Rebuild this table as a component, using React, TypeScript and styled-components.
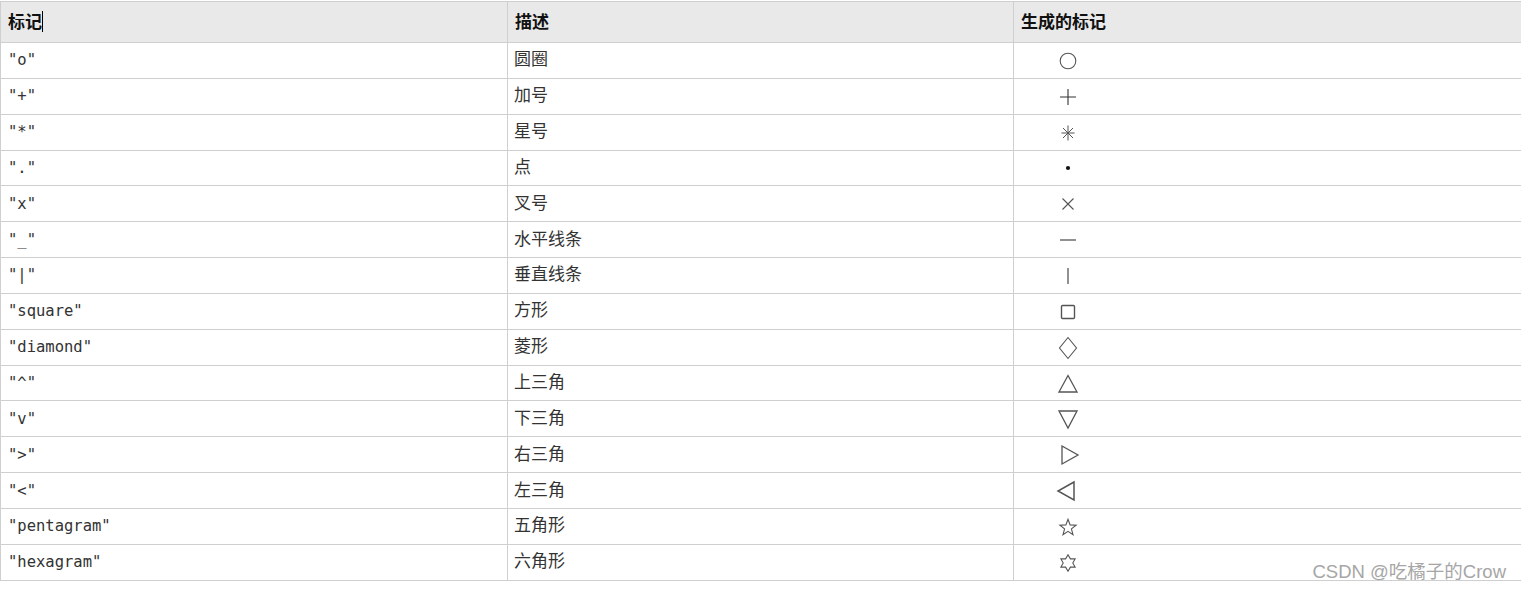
import React from "react";
import styled, { createGlobalStyle } from "styled-components";

const Global = createGlobalStyle`
  html, body { margin: 0; padding: 0; background: #fff; }
  body { font-family: "Noto Sans CJK SC", "Noto Sans", sans-serif; }
`;

const Page = styled.div`
  position: relative;
  width: 1521px;
  height: 590px;
  padding-top: 1px;
  box-sizing: border-box;
`;

const Table = styled.table`
  width: 1521px;
  border-collapse: collapse;
  table-layout: fixed;
  border: 1px solid #cfcfcf;
`;

const HeadRow = styled.tr`
  background: #e9e9e9;
  height: 41px;
`;

const Row = styled.tr`
  height: 35.85px;
`;

const HeadCell = styled.th`
  border: 1px solid #cfcfcf;
  text-align: left;
  padding: 0 0 3px 7px;
  font-family: "Noto Sans CJK SC", sans-serif;
  font-weight: 700;
  font-size: 17px;
  color: #111;
  vertical-align: middle;
`;

const Cell = styled.td<{ $mono?: boolean }>`
  border: 1px solid #cfcfcf;
  padding: 0 0 ${(p) => (p.$mono ? "0px" : "4px")} ${(p) => (p.$mono ? "7px" : "6px")};
  font-family: ${(p) =>
    p.$mono ? `"DejaVu Sans Mono", monospace` : `"Noto Sans CJK SC", sans-serif`};
  font-size: ${(p) => (p.$mono ? "15.5px" : "17px")};
  line-height: 24px;
  color: #333;
  vertical-align: middle;
  white-space: pre;
`;

const MarkCell = styled.td`
  border: 1px solid #cfcfcf;
  padding: 1px 0 0 42px;
  vertical-align: middle;
  line-height: 0;
`;

const Caret = styled.span`
  display: inline-block;
  width: 1px;
  height: 21px;
  background: #000;
  vertical-align: -4px;
`;

const Watermark = styled.div`
  position: absolute;
  right: 15px;
  bottom: 8px;
  font-family: "Liberation Sans", "Noto Sans CJK SC", sans-serif;
  font-size: 18.5px;
  color: #a6a6a6;
  line-height: 20px;
`;

const Svg = styled.svg`
  width: 24px;
  height: 24px;
  display: inline-block;
`;

type Kind =
  | "o" | "+" | "*" | "." | "x" | "_" | "|" | "square" | "diamond"
  | "^" | "v" | ">" | "<" | "pentagram" | "hexagram";

const starPts = (n: number, ro: number, ri: number, cx: number, cy: number, rot: number) => {
  const pts: string[] = [];
  for (let i = 0; i < n * 2; i++) {
    const r = i % 2 === 0 ? ro : ri;
    const a = rot + (Math.PI * i) / n;
    pts.push(`${(cx + r * Math.sin(a)).toFixed(2)},${(cy - r * Math.cos(a)).toFixed(2)}`);
  }
  return pts.join(" ");
};

const Marker: React.FC<{ kind: Kind }> = ({ kind }) => {
  const s = { fill: "none", stroke: "#555", strokeWidth: 1.1 } as const;
  let body: React.ReactNode = null;
  switch (kind) {
    case "o":
      body = <circle cx={12} cy={12} r={7.8} {...s} />;
      break;
    case "+":
      body = <path d="M4 12H20M12 4V20" {...s} stroke="#333" />;
      break;
    case "*":
      body = (
        <path
          d="M12 4.5V19.5M5.5 12H18.5M7 7L17 17M17 7L7 17"
          {...s}
          strokeWidth={1}
        />
      );
      break;
    case ".":
      body = <circle cx={12} cy={12} r={2.1} fill="#111" />;
      break;
    case "x":
      body = <path d="M6.5 6.5L17.5 17.5M17.5 6.5L6.5 17.5" {...s} />;
      break;
    case "_":
      body = <path d="M4 12H20" {...s} strokeWidth={1.3} />;
      break;
    case "|":
      body = <path d="M12 4V20" {...s} strokeWidth={1.3} />;
      break;
    case "square":
      body = <rect x={5.5} y={5.5} width={13} height={13} rx={1} {...s} strokeWidth={1.4} />;
      break;
    case "diamond":
      body = <polygon points="12,1.5 20.5,12 12,22.5 3.5,12" {...s} />;
      break;
    case "^":
      body = <polygon points="12,3.5 21,20 3,20" {...s} strokeWidth={1.3} />;
      break;
    case "v":
      body = <polygon points="3,4 21,4 12,21" {...s} strokeWidth={1.3} />;
      break;
    case ">":
      body = <polygon points="6,3 22,12 6,21" {...s} strokeWidth={1.3} />;
      break;
    case "<":
      body = <polygon points="18,3 2,12 18,21" {...s} strokeWidth={1.5} />;
      break;
    case "pentagram":
      body = <polygon points={starPts(5, 8.5, 3.6, 12, 12.8, 0)} {...s} />;
      break;
    case "hexagram":
      body = <polygon points={starPts(6, 8.2, 4.8, 12, 12, 0)} {...s} />;
      break;
  }
  return (
    <Svg viewBox="0 0 24 24" aria-hidden>
      {body}
    </Svg>
  );
};

const rows: { code: string; desc: string; kind: Kind }[] = [
  { code: '"o"', desc: "圆圈", kind: "o" },
  { code: '"+"', desc: "加号", kind: "+" },
  { code: '"*"', desc: "星号", kind: "*" },
  { code: '"."', desc: "点", kind: "." },
  { code: '"x"', desc: "叉号", kind: "x" },
  { code: '"_"', desc: "水平线条", kind: "_" },
  { code: '"|"', desc: "垂直线条", kind: "|" },
  { code: '"square"', desc: "方形", kind: "square" },
  { code: '"diamond"', desc: "菱形", kind: "diamond" },
  { code: '"^"', desc: "上三角", kind: "^" },
  { code: '"v"', desc: "下三角", kind: "v" },
  { code: '">"', desc: "右三角", kind: ">" },
  { code: '"<"', desc: "左三角", kind: "<" },
  { code: '"pentagram"', desc: "五角形", kind: "pentagram" },
  { code: '"hexagram"', desc: "六角形", kind: "hexagram" },
];

export default function App() {
  return (
    <>
      <Global />
      <Page>
        <Table>
          <colgroup>
            <col style={{ width: 507 }} />
            <col style={{ width: 506 }} />
            <col style={{ width: 508 }} />
          </colgroup>
          <thead>
            <HeadRow>
              <HeadCell>
                标记<Caret />
              </HeadCell>
              <HeadCell>描述</HeadCell>
              <HeadCell>生成的标记</HeadCell>
            </HeadRow>
          </thead>
          <tbody>
            {rows.map((r) => (
              <Row key={r.code}>
                <Cell $mono>{r.code}</Cell>
                <Cell>{r.desc}</Cell>
                <MarkCell>
                  <Marker kind={r.kind} />
                </MarkCell>
              </Row>
            ))}
          </tbody>
        </Table>
        <Watermark>CSDN @吃橘子的Crow</Watermark>
      </Page>
    </>
  );
}
